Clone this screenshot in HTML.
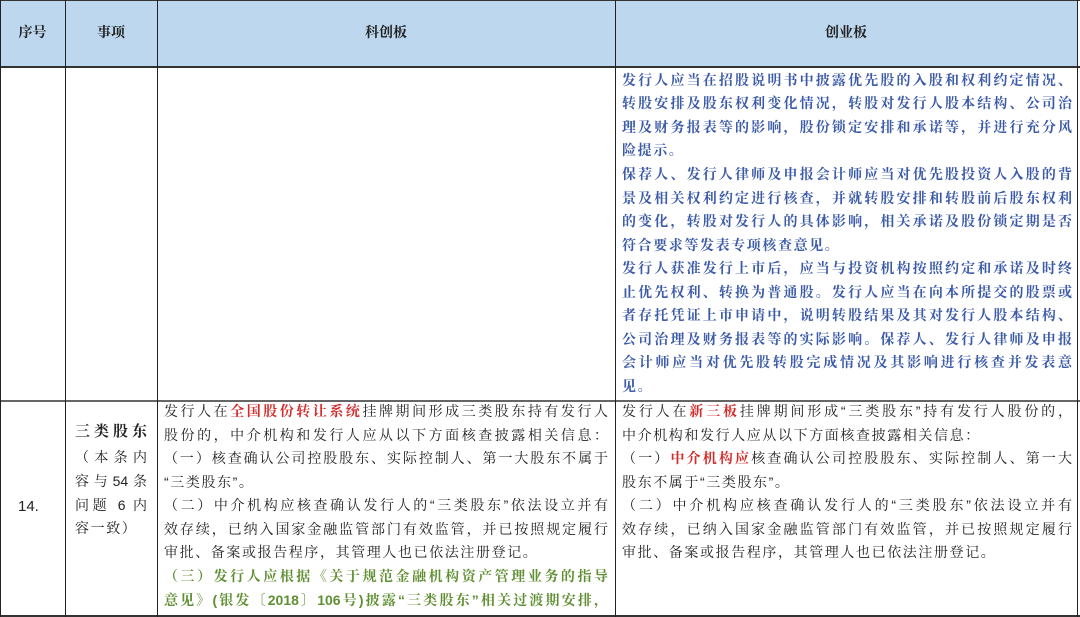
<!DOCTYPE html>
<html><head><meta charset="utf-8"><style>
body{margin:0;width:1080px;height:617px;background:#fff;position:relative;overflow:hidden;font-family:"Liberation Sans","Noto Serif CJK SC","Noto Sans CJK SC",sans-serif;}
.hd{position:absolute;left:0;top:0;width:1078px;height:66px;background:#bdd7ee;}
.v{position:absolute;top:0;width:1px;height:617px;background:#222;}
.h{position:absolute;left:0;width:1080px;background:#333;}
.t{position:absolute;font-size:14px;text-align:justify;text-align-last:justify;white-space:nowrap;height:23px;line-height:23px;}
.l{text-align-last:left;letter-spacing:1.6px;}
.b{color:#3b5aa8;font-weight:bold;}
.k{color:#222;}
.g{color:#5f8f32;font-weight:bold;}
.r{color:#d42a2a;font-weight:bold;}
.hc{position:absolute;top:22px;font-size:14px;font-weight:bold;color:#222;text-align:center;}
</style></head><body>
<div class="hd"></div>
<div class="h" style="top:0;height:1px"></div>
<div class="h" style="top:66px;height:2px"></div>
<div class="h" style="top:400px;height:2px;background:#666"></div>
<div class="h" style="top:615px;height:2px"></div>
<div class="v" style="left:0"></div>
<div class="v" style="left:65px"></div>
<div class="v" style="left:157px"></div>
<div class="v" style="left:615px"></div>
<div class="v" style="left:1077px"></div>
<div class="hc" style="left:0;width:65px">序号</div>
<div class="hc" style="left:65px;width:92px">事项</div>
<div class="hc" style="left:157px;width:458px">科创板</div>
<div class="hc" style="left:615px;width:462px">创业板</div>

<div class="b">
<div class="t" style="left:622px;top:69px;width:450px">发行人应当在招股说明书中披露优先股的入股和权利约定情况、</div>
<div class="t" style="left:622px;top:92px;width:450px">转股安排及股东权利变化情况，转股对发行人股本结构、公司治</div>
<div class="t" style="left:622px;top:116px;width:450px">理及财务报表等的影响，股份锁定安排和承诺等，并进行充分风</div>
<div class="t l" style="left:622px;top:139px;width:450px">险提示。</div>
<div class="t" style="left:622px;top:163px;width:450px">保荐人、发行人律师及申报会计师应当对优先股投资人入股的背</div>
<div class="t" style="left:622px;top:187px;width:450px">景及相关权利约定进行核查，并就转股安排和转股前后股东权利</div>
<div class="t" style="left:622px;top:210px;width:450px">的变化，转股对发行人的具体影响，相关承诺及股份锁定期是否</div>
<div class="t l" style="left:622px;top:234px;width:450px">符合要求等发表专项核查意见。</div>
<div class="t" style="left:622px;top:257px;width:450px">发行人获准发行上市后，应当与投资机构按照约定和承诺及时终</div>
<div class="t" style="left:622px;top:281px;width:450px">止优先权利、转换为普通股。发行人应当在向本所提交的股票或</div>
<div class="t" style="left:622px;top:304px;width:450px">者存托凭证上市申请中，说明转股结果及其对发行人股本结构、</div>
<div class="t" style="left:622px;top:328px;width:450px">公司治理及财务报表等的实际影响。保荐人、发行人律师及申报</div>
<div class="t" style="left:622px;top:351px;width:450px">会计师应当对优先股转股完成情况及其影响进行核查并发表意</div>
<div class="t l" style="left:622px;top:375px;width:450px">见。</div>
</div>

<div class="k">
<div class="t l" style="left:18px;top:495px;font-size:15px;letter-spacing:0">14.</div>
<div class="t" style="left:75px;top:420px;width:72px;font-weight:bold;font-size:15px">三类股东</div>
<div class="t" style="left:75px;top:446px;width:72px">（本条内</div>
<div class="t" style="left:75px;top:470px;width:72px">容与54条</div>
<div class="t" style="left:75px;top:494px;width:72px">问题 6 内</div>
<div class="t l" style="left:75px;top:517px;width:72px">容一致）</div>

<div class="t" style="left:164px;top:400px;width:444px">发行人在<span class="r">全国股份转让系统</span>挂牌期间形成三类股东持有发行人</div>
<div class="t" style="left:164px;top:424px;width:444px">股份的，中介机构和发行人应从以下方面核查披露相关信息：</div>
<div class="t" style="left:164px;top:447px;width:444px">（一）核查确认公司控股股东、实际控制人、第一大股东不属于</div>
<div class="t l" style="left:164px;top:471px;width:444px">“三类股东”。</div>
<div class="t" style="left:164px;top:494px;width:444px">（二）中介机构应核查确认发行人的“三类股东”依法设立并有</div>
<div class="t" style="left:164px;top:518px;width:444px">效存续，已纳入国家金融监管部门有效监管，并已按照规定履行</div>
<div class="t l" style="left:164px;top:541px;width:444px">审批、备案或报告程序，其管理人也已依法注册登记。</div>
<div class="t g" style="left:164px;top:565px;width:444px">（三）发行人应根据《关于规范金融机构资产管理业务的指导</div>
<div class="t g" style="left:164px;top:589px;width:444px">意见》(银发〔2018〕106号)披露“三类股东”相关过渡期安排，</div>

<div class="t" style="left:622px;top:400px;width:450px">发行人在<span class="r">新三板</span>挂牌期间形成“三类股东”持有发行人股份的，</div>
<div class="t l" style="left:622px;top:424px;width:450px">中介机构和发行人应从以下方面核查披露相关信息：</div>
<div class="t" style="left:622px;top:447px;width:450px">（一）<span class="r">中介机构应</span>核查确认公司控股股东、实际控制人、第一大</div>
<div class="t l" style="left:622px;top:471px;width:450px">股东不属于“三类股东”。</div>
<div class="t" style="left:622px;top:494px;width:450px">（二）中介机构应核查确认发行人的“三类股东”依法设立并有</div>
<div class="t" style="left:622px;top:518px;width:450px">效存续，已纳入国家金融监管部门有效监管，并已按照规定履行</div>
<div class="t l" style="left:622px;top:541px;width:450px">审批、备案或报告程序，其管理人也已依法注册登记。</div>
</div>
</body></html>
